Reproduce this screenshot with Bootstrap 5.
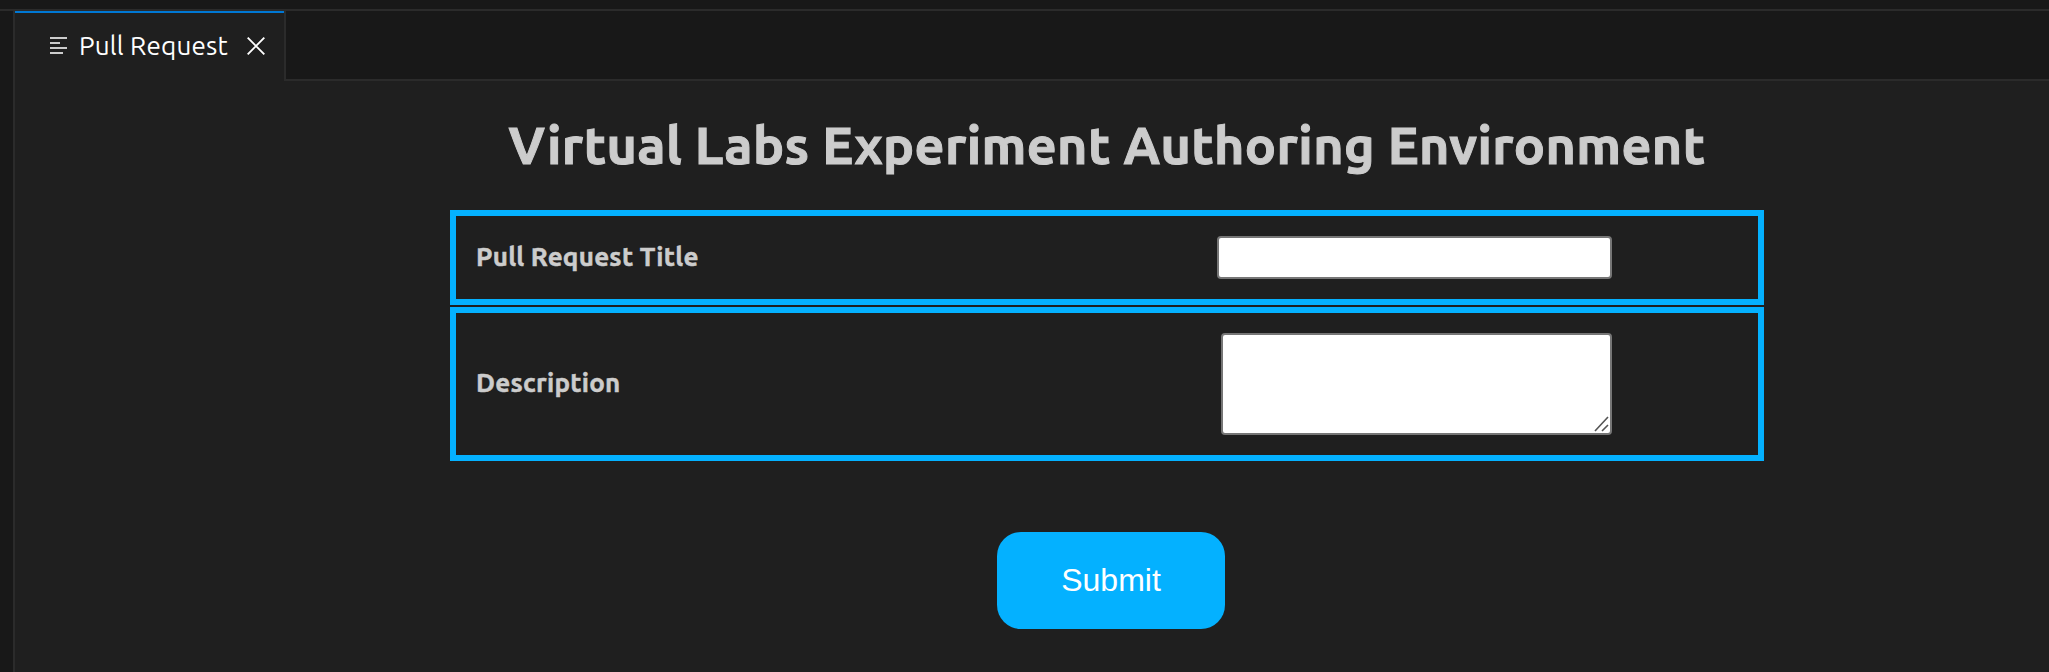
<!DOCTYPE html>
<html lang="en">
<head>
<meta charset="utf-8">
<title>Pull Request</title>
<link href="https://cdn.jsdelivr.net/npm/bootstrap@5.3.0/dist/css/bootstrap.min.css" rel="stylesheet">
<style>
body{background:#181818;color:#ccc;font-family:Ubuntu,"Noto Sans",sans-serif;height:672px;overflow:hidden}
.titlebar{height:11px;border-bottom:2px solid #2b2b2b}
.sidebar{width:15px;border-right:2px solid #2b2b2b}
.tabs{height:70px}
.tab{width:269px;border-top:2px solid #0078d4;background:#1f1f1f;color:#fff;padding-left:35px}
.tab span{font-size:26px;line-height:36px;margin:15px 0 0 12px;letter-spacing:.22px;white-space:nowrap;width:150px}
.tab .lines{margin-top:23px}
.tab .close-x{margin:24px 0 0 18px}
.tab-rest{border-left:2px solid #2b2b2b;border-bottom:2px solid #2b2b2b}
.editor{background:#1f1f1f}
.heading{font-size:52px;font-weight:700;line-height:60px;margin-top:34px;letter-spacing:.4px;white-space:nowrap;-webkit-text-stroke:1px #ccc}
.panel{width:1314px;margin-left:435px}
.rows{gap:2px;margin-top:35px}
.field{border:6px solid #04b1ff;padding:20px 146px 20px 20px}
.field label{font-size:26px;font-weight:700;line-height:36px;letter-spacing:.25px;margin-bottom:2px;-webkit-text-stroke:.5px #ccc}
.field input,.field textarea{border:2px solid #767676;border-radius:4px;background:#fff;padding:4px;outline:0}
.field input{width:395px;height:43px}
.field textarea{width:391px;height:102px;resize:none;display:block}
.grip{right:3px;bottom:3px}
.send{width:228px;height:97px;margin:71px 0 0 982px;border-radius:24px;background:#04b1ff;color:#fff;font:32px "Liberation Sans",Arial,sans-serif;border:0}
</style>
</head>
<body class="d-flex flex-column">
<header class="titlebar flex-shrink-0"></header>
<div class="d-flex flex-grow-1">
<aside class="sidebar flex-shrink-0"></aside>
<main class="d-flex flex-column flex-grow-1">
<div class="tabs d-flex flex-shrink-0">
<div class="tab d-flex align-items-start flex-shrink-0">
<svg class="lines" width="17" height="19" viewBox="0 0 17 19" fill="#ccc"><path d="M0 1h17v2H0zM0 6h10v2H0zM0 11h17v2H0zM0 16h13v2H0z"/></svg>
<span>Pull Request</span>
<svg class="close-x" width="18" height="18" viewBox="0 0 18 18" fill="none" stroke="#fff" stroke-width="1.9"><path d="M.7.7l16.6 16.6M17.3.7L.7 17.3"/></svg>
</div>
<div class="tab-rest flex-grow-1"></div>
</div>
<section class="editor flex-grow-1">
<div class="panel d-flex flex-column">
<h1 class="heading text-center mb-0">Virtual Labs Experiment Authoring Environment</h1>
<form class="rows d-flex flex-column">
<div class="field d-flex align-items-center justify-content-between"><label for="t">Pull Request Title</label><input id="t" type="text"></div>
<div class="field d-flex align-items-center justify-content-between"><label for="d">Description</label>
<div class="position-relative"><textarea id="d"></textarea>
<svg class="grip position-absolute" width="15" height="16" viewBox="0 0 15 16" fill="none" stroke="#555" stroke-width="1.6"><path d="M1 15L14 1M8 15l6-6"/></svg></div></div>
</form>
</div>
<button class="send d-block" type="button">Submit</button>
</section>
</main>
</div>
<script src="https://cdn.jsdelivr.net/npm/bootstrap@5.3.0/dist/js/bootstrap.bundle.min.js"></script>
</body>
</html>
